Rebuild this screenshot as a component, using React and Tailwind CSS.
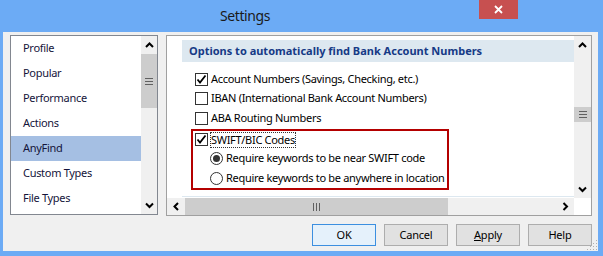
const FONT = { fontFamily: '"Noto Sans", "Liberation Sans", sans-serif' };

const CATEGORIES = ["Profile", "Popular", "Performance", "Actions", "AnyFind", "Custom Types", "File Types"];

function Chevron({ dir = "up" }) {
  const points = {
    up: "1,5 4.5,1.5 8,5",
    down: "1,1.5 4.5,5 8,1.5",
    left: "5,1 1.5,4.5 5,8",
    right: "1.5,1 5,4.5 1.5,8"
  }[dir];
  const vertical = dir === "up" || dir === "down";
  return (
    <svg width={vertical ? 9 : 7} height={vertical ? 7 : 9} viewBox={vertical ? "0 0 9 7" : "0 0 7 9"}>
      <polyline points={points} fill="none" stroke="#000" strokeWidth="2" />
    </svg>
  );
}

function GripV() {
  return (
    <svg width="8" height="7" viewBox="0 0 8 7">
      <rect x="0" y="0" width="8" height="1" fill="#606060" />
      <rect x="0" y="3" width="8" height="1" fill="#606060" />
      <rect x="0" y="6" width="8" height="1" fill="#606060" />
    </svg>
  );
}

function GripH() {
  return (
    <svg width="7" height="8" viewBox="0 0 7 8">
      <rect x="0" y="0" width="1" height="8" fill="#606060" />
      <rect x="3" y="0" width="1" height="8" fill="#606060" />
      <rect x="6" y="0" width="1" height="8" fill="#606060" />
    </svg>
  );
}

function Checkbox({ checked }) {
  return (
    <span className="flex h-[13px] w-[13px] shrink-0 items-center justify-center border border-[#333333] bg-white">
      {checked && (
        <svg width="11" height="11" viewBox="0 0 11 11">
          <polyline points="1.5,5.5 4,8.5 9.5,1.5" fill="none" stroke="#000" strokeWidth="1.8" />
        </svg>
      )}
    </span>
  );
}

function Radio({ checked }) {
  return (
    <span className="flex h-[13px] w-[13px] shrink-0 items-center justify-center rounded-full border border-[#333333] bg-white">
      {checked && <span className="h-[7px] w-[7px] rounded-full bg-[#333333]" />}
    </span>
  );
}

function Button({ children, primary }) {
  return (
    <div
      className={
        "flex h-[22px] w-[64px] items-center justify-center border text-[11px] tracking-[-0.2px] text-black " +
        (primary ? "border-[#3c8fe0] bg-[#e5f1fb]" : "border-[#adadad] bg-[#e1e1e1]")
      }
    >
      {children}
    </div>
  );
}

export default function App() {
  return (
    <div className="flex h-[256px] w-[603px] flex-col bg-[#6cabf5]" style={FONT}>
      {/* title bar */}
      <div className="relative flex h-[32px] shrink-0 items-start">
        <div className="flex h-[32px] w-[490px] items-center justify-center pb-[1px] text-[14px] tracking-[-0.4px] text-[#1a1a1a]">
          Settings
        </div>
        <div className="ml-[-11px] flex h-[19px] w-[39px] items-center justify-center bg-[#c75050]">
          <svg width="9" height="9" viewBox="0 0 9 9">
            <path d="M1 1L8 8M8 1L1 8" stroke="#fff" strokeWidth="1.8" />
          </svg>
        </div>
      </div>

      {/* body */}
      <div className="relative ml-[3px] mr-[5px] flex h-[219px] flex-col bg-[#f0f0f0]">
        <div className="flex pl-[7px] pt-[3px]">
          {/* category list */}
          <div className="flex h-[180px] w-[148px] border border-[#828790] bg-white">
            <div className="flex-1">
              {CATEGORIES.map((name) => (
                <div
                  key={name}
                  className={
                    "flex h-[25px] items-center pl-[12px] text-[11px] tracking-[-0.3px] text-[#14143a] " +
                    (name === "AnyFind" ? "bg-[#a5bfe3]" : "")
                  }
                >
                  {name}
                </div>
              ))}
            </div>
            <div className="flex w-[16px] flex-col bg-[#f0f0f0]">
              <div className="flex h-[18px] items-center justify-center">
                <Chevron dir="up" />
              </div>
              <div className="flex h-[54px] items-center justify-center bg-[#cdcdcd]">
                <GripV />
              </div>
              <div className="flex-1" />
              <div className="flex h-[18px] items-center justify-center">
                <Chevron dir="down" />
              </div>
            </div>
          </div>

          {/* options panel */}
          <div className="ml-[8px] flex h-[181px] w-[426px] flex-col border border-[#a0a0a0] bg-white">
            <div className="flex h-[162px]">
              <div className="flex w-[407px] flex-col pl-[15px] pt-[4px]">
                <div className="flex h-[22px] items-center whitespace-nowrap bg-[#dde8f0] pl-[7px] text-[11px] font-bold text-[#163a86]">
                  Options to automatically find Bank Account Numbers
                </div>
                <div className="flex flex-col whitespace-nowrap pl-[9px] pt-[7px] text-[11px] tracking-[-0.3px] text-black">
                  <div className="flex h-[20px] items-center gap-[3px] pl-[4px]">
                    <Checkbox checked />
                    Account Numbers (Savings, Checking, etc.)
                  </div>
                  <div className="flex h-[19px] items-center gap-[3px] pl-[4px]">
                    <Checkbox />
                    IBAN (International Bank Account Numbers)
                  </div>
                  <div className="flex h-[20px] items-center gap-[3px] pl-[4px]">
                    <Checkbox />
                    ABA Routing Numbers
                  </div>
                  <div className="mt-[1px] flex w-[258px] flex-col border-2 border-[#b40000] pl-[2px]">
                    <div className="flex h-[17px] items-center gap-[3px]">
                      <Checkbox checked />
                      <span className="leading-[14px] outline-1 outline-dotted outline-[#333333]">SWIFT/BIC Codes</span>
                    </div>
                    <div className="flex h-[20px] items-center gap-[3px] pl-[15px]">
                      <Radio checked />
                      Require keywords to be near SWIFT code
                    </div>
                    <div className="flex h-[20px] items-center gap-[3px] pl-[15px]">
                      <Radio />
                      Require keywords to be anywhere in location
                    </div>
                  </div>
                </div>
                <div className="mt-auto mb-[1px] h-[1px] bg-[#dde8f0]" />
              </div>
              <div className="flex w-[17px] flex-col bg-[#f0f0f0]">
                <div className="flex h-[18px] items-center justify-center">
                  <Chevron dir="up" />
                </div>
                <div className="h-[53px]" />
                <div className="flex h-[15px] items-center justify-center bg-[#cdcdcd]">
                  <GripV />
                </div>
                <div className="flex-1" />
                <div className="flex h-[18px] items-center justify-center">
                  <Chevron dir="down" />
                </div>
              </div>
            </div>
            <div className="flex h-[17px]">
              <div className="flex w-[407px] items-center bg-[#f0f0f0]">
                <div className="flex w-[18px] justify-center">
                  <Chevron dir="left" />
                </div>
                <div className="flex h-full w-[263px] items-center justify-center bg-[#cdcdcd]">
                  <GripH />
                </div>
                <div className="flex-1" />
                <div className="flex w-[18px] justify-center">
                  <Chevron dir="right" />
                </div>
              </div>
              <div className="w-[17px] bg-white" />
            </div>
          </div>
        </div>

        {/* buttons */}
        <div className="mt-[8px] flex justify-end gap-[8px] pr-[6px]">
          <Button primary>OK</Button>
          <Button>Cancel</Button>
          <Button>
            <span>
              <span className="underline">A</span>pply
            </span>
          </Button>
          <Button>Help</Button>
        </div>

        {/* size grip */}
        <svg className="absolute bottom-[1px] right-[0px]" width="12" height="12" viewBox="0 0 12 12">
          <rect x="10" y="2" width="1" height="1" fill="#b0b0b0" />
          <rect x="10" y="5" width="1" height="1" fill="#b0b0b0" />
          <rect x="7" y="5" width="1" height="1" fill="#b0b0b0" />
          <rect x="10" y="8" width="1" height="1" fill="#b0b0b0" />
          <rect x="7" y="8" width="1" height="1" fill="#b0b0b0" />
          <rect x="4" y="8" width="1" height="1" fill="#b0b0b0" />
          <rect x="10" y="11" width="1" height="1" fill="#b0b0b0" />
          <rect x="7" y="11" width="1" height="1" fill="#b0b0b0" />
          <rect x="4" y="11" width="1" height="1" fill="#b0b0b0" />
          <rect x="1" y="11" width="1" height="1" fill="#b0b0b0" />
        </svg>
      </div>
    </div>
  );
}
